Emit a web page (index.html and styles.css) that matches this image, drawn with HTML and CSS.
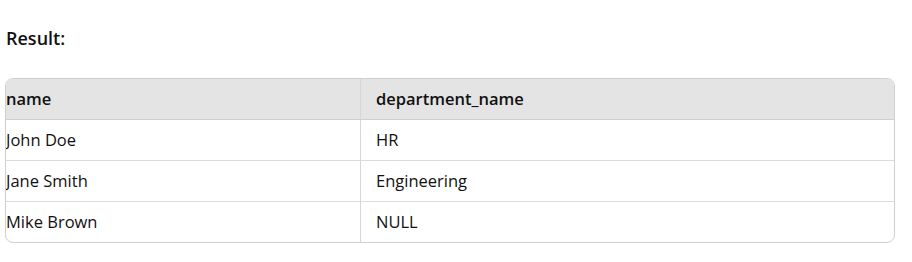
FILE: index.html
```html
<!DOCTYPE html>
<html>
<head>
<meta charset="utf-8">
<link rel="stylesheet" href="styles.css">
</head>
<body>
<div class="result">
  <h3 class="result-title">Result:</h3>
  <div class="table-wrap">
    <table class="result-table">
      <thead>
        <tr><th>name</th><th>department_name</th></tr>
      </thead>
      <tbody>
        <tr><td>John Doe</td><td>HR</td></tr>
        <tr><td>Jane Smith</td><td>Engineering</td></tr>
        <tr><td>Mike Brown</td><td>NULL</td></tr>
      </tbody>
    </table>
  </div>
</div>
</body>
</html>
```

FILE: styles.css
```css
html, body {
  margin: 0;
  padding: 0;
  background: #ffffff;
}
body {
  font-family: "Open Sans", "Noto Sans", sans-serif;
  color: #111111;
}
.result {
  padding: 0 17px 0 5px;
}
.result-title {
  margin: 0;
  padding-top: 26px;
  font-size: 18px;
  font-weight: 600;
  line-height: 24px;
  padding-left: 1px;
}
.table-wrap {
  margin-top: 28px;
  border: 1px solid #cfcfcf;
  border-radius: 8px;
  overflow: hidden;
}
.result-table {
  width: 100%;
  border-collapse: collapse;
  font-size: 16.5px;
}
.result-table th,
.result-table td {
  height: 40px;
  padding: 0 15px;
  text-align: left;
  vertical-align: middle;
  line-height: 20px;
}
.result-table th:first-child,
.result-table td:first-child {
  padding-left: 0;
  width: 339px;
  border-right: 1px solid #d6d6d6;
}
.result-table th {
  background: #e4e4e4;
  font-weight: 600;
  border-bottom: 1px solid #cfcfcf;
}
.result-table td {
  border-top: 1px solid #dcdcdc;
  font-weight: 400;
}
.result-table tbody tr:first-child td {
  border-top: none;
}
```
